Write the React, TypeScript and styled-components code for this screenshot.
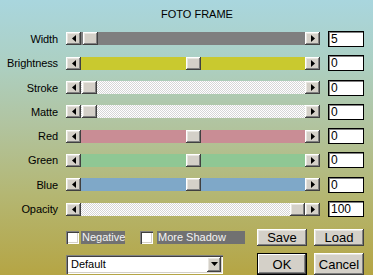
import React from 'react';
import styled, { createGlobalStyle, css } from 'styled-components';

const Global = createGlobalStyle`
  html, body { margin: 0; padding: 0; }
  body { font-family: "Liberation Sans", Arial, sans-serif; }
`;

const raised = css`
  background: #d4d0c8;
  box-shadow: inset -1px -1px #404040, inset 1px 1px #ffffff, inset -2px -2px #808080, inset 2px 2px #e8e6e0;
`;

const Page = styled.div`
  width: 373px;
  height: 275px;
  overflow: hidden;
  box-sizing: border-box;
  background: linear-gradient(180deg, #a9d6de 0%, #acd0c4 22%, #b1c4a0 45%, #b4b774 70%, #b5a544 100%);
  display: flex;
  flex-direction: column;
  color: #000;
`;

const Title = styled.div`
  height: 27px;
  box-sizing: border-box;
  padding: 2px 0 0 21px;
  display: flex;
  align-items: center;
  justify-content: center;
  font-size: 11px;
`;

const Rows = styled.div`
  display: grid;
  grid-template-columns: 58px 254px 36px;
  grid-auto-rows: 24.3px;
  column-gap: 8px;
  align-items: center;
`;

const Label = styled.div`
  text-align: right;
  font-size: 11px;
  white-space: nowrap;
  letter-spacing: -0.1px;
`;

const Scroll = styled.div`
  display: flex;
  height: 13px;
`;

const ArrowBtn = styled.div`
  width: 15px;
  flex: none;
  ${raised};
  display: flex;
  align-items: center;
  justify-content: center;
`;

const Track = styled.div<{ $fill: string }>`
  flex: 1;
  display: flex;
  background: ${(p) => p.$fill};
  background-size: 2px 2px;
`;

const Spacer = styled.div<{ $grow: number }>`
  flex: ${(p) => p.$grow} 1 0;
`;

const Thumb = styled.div`
  width: 15px;
  flex: none;
  ${raised};
`;

const ValueBox = styled.div`
  height: 16px;
  box-sizing: border-box;
  background: #fff;
  border: 1px solid #000;
  box-shadow: inset 1px 1px #808080;
  font-size: 12px;
  line-height: 14px;
  padding-left: 2px;
`;

const OptionRow = styled.div`
  display: flex;
  align-items: center;
  padding: 0 0 0 66px;
  margin-top: 5px;
  height: 22px;
`;

const LeftGroup = styled.div`
  width: 191px;
  display: flex;
  align-items: center;
`;

const Check = styled.div`
  width: 13px;
  height: 13px;
  flex: none;
  box-sizing: border-box;
  background: #fff;
  box-shadow: inset 1px 1px #808080, inset 2px 2px #404040, inset -1px -1px #ffffff, inset -2px -2px #d4d0c8;
`;

const CheckLabel = styled.div<{ $w: number; $ml: number; $mr: number }>`
  width: ${(p) => p.$w}px;
  margin-left: ${(p) => p.$ml}px;
  margin-right: ${(p) => p.$mr}px;
  height: 13px;
  background: #717171;
  color: #f4f4f4;
  font-size: 11px;
  line-height: 13px;
  padding-left: 1px;
  box-sizing: border-box;
  white-space: nowrap;
`;

const Buttons = styled.div`
  display: flex;
  gap: 7px;
`;

const Btn = styled.div<{ $default?: boolean; $tall?: boolean }>`
  width: 50px;
  height: ${(p) => (p.$tall ? 22 : 17)}px;
  box-sizing: border-box;
  ${raised};
  ${(p) =>
    p.$default &&
    css`
      box-shadow: inset 0 0 0 1px #000, inset -2px -2px #404040, inset 2px 2px #ffffff, inset -3px -3px #808080;
    `}
  display: flex;
  align-items: center;
  justify-content: center;
  font-family: "Liberation Sans Narrow", "Liberation Sans", Arial, sans-serif;
  font-size: 13px;
`;

const BottomRow = styled.div`
  display: flex;
  align-items: center;
  padding-left: 66px;
  margin-top: 5px;
`;

const Select = styled.div`
  width: 157px;
  height: 19px;
  margin-right: 34px;
  box-sizing: border-box;
  background: #fff;
  box-shadow: inset 1px 1px #808080, inset 2px 2px #404040, inset -1px -1px #ffffff, inset -2px -2px #d4d0c8;
  display: flex;
  align-items: center;
  padding: 2px;
`;

const SelectText = styled.div`
  flex: 1;
  font-size: 11px;
  padding-left: 3px;
`;

const SelectBtn = styled.div`
  width: 14px;
  height: 15px;
  ${raised};
  display: flex;
  align-items: center;
  justify-content: center;
`;

const checker = 'repeating-conic-gradient(#ffffff 0 25%, #d6d6d6 0 50%)';

const rows = [
  { label: 'Width', fill: '#7f7f7f', pos: 0.01, value: '5' },
  { label: 'Brightness', fill: '#c9c92f', pos: 0.5, value: '0' },
  { label: 'Stroke', fill: checker, pos: 0.005, value: '0' },
  { label: 'Matte', fill: checker, pos: 0.005, value: '0' },
  { label: 'Red', fill: '#c98d95', pos: 0.5, value: '0' },
  { label: 'Green', fill: '#8fc794', pos: 0.5, value: '0' },
  { label: 'Blue', fill: '#7fa8c8', pos: 0.5, value: '0' },
  { label: 'Opacity', fill: checker, pos: 1, value: '100' },
];

const LeftArrow = () => (
  <svg width="4" height="7" viewBox="0 0 4 7">
    <path d="M4 0 L0 3.5 L4 7 Z" fill="#000" />
  </svg>
);
const RightArrow = () => (
  <svg width="4" height="7" viewBox="0 0 4 7">
    <path d="M0 0 L4 3.5 L0 7 Z" fill="#000" />
  </svg>
);
const DownArrow = () => (
  <svg width="7" height="4" viewBox="0 0 7 4">
    <path d="M0 0 L7 0 L3.5 4 Z" fill="#000" />
  </svg>
);

export default function App() {
  return (
    <Page>
      <Global />
      <Title>FOTO FRAME</Title>
      <Rows>
        {rows.map((r) => (
          <React.Fragment key={r.label}>
            <Label>{r.label}</Label>
            <Scroll>
              <ArrowBtn>
                <LeftArrow />
              </ArrowBtn>
              <Track $fill={r.fill}>
                <Spacer $grow={r.pos} />
                <Thumb />
                <Spacer $grow={1 - r.pos} />
              </Track>
              <ArrowBtn>
                <RightArrow />
              </ArrowBtn>
            </Scroll>
            <ValueBox>{r.value}</ValueBox>
          </React.Fragment>
        ))}
      </Rows>
      <OptionRow>
        <LeftGroup>
          <Check />
          <CheckLabel $w={44} $ml={2} $mr={15}>Negative</CheckLabel>
          <Check />
          <CheckLabel $w={88} $ml={4} $mr={0}>More Shadow</CheckLabel>
        </LeftGroup>
        <Buttons>
          <Btn>Save</Btn>
          <Btn>Load</Btn>
        </Buttons>
      </OptionRow>
      <BottomRow>
        <Select>
          <SelectText>Default</SelectText>
          <SelectBtn>
            <DownArrow />
          </SelectBtn>
        </Select>
        <Buttons>
          <Btn $default $tall>OK</Btn>
          <Btn $tall>Cancel</Btn>
        </Buttons>
      </BottomRow>
    </Page>
  );
}
